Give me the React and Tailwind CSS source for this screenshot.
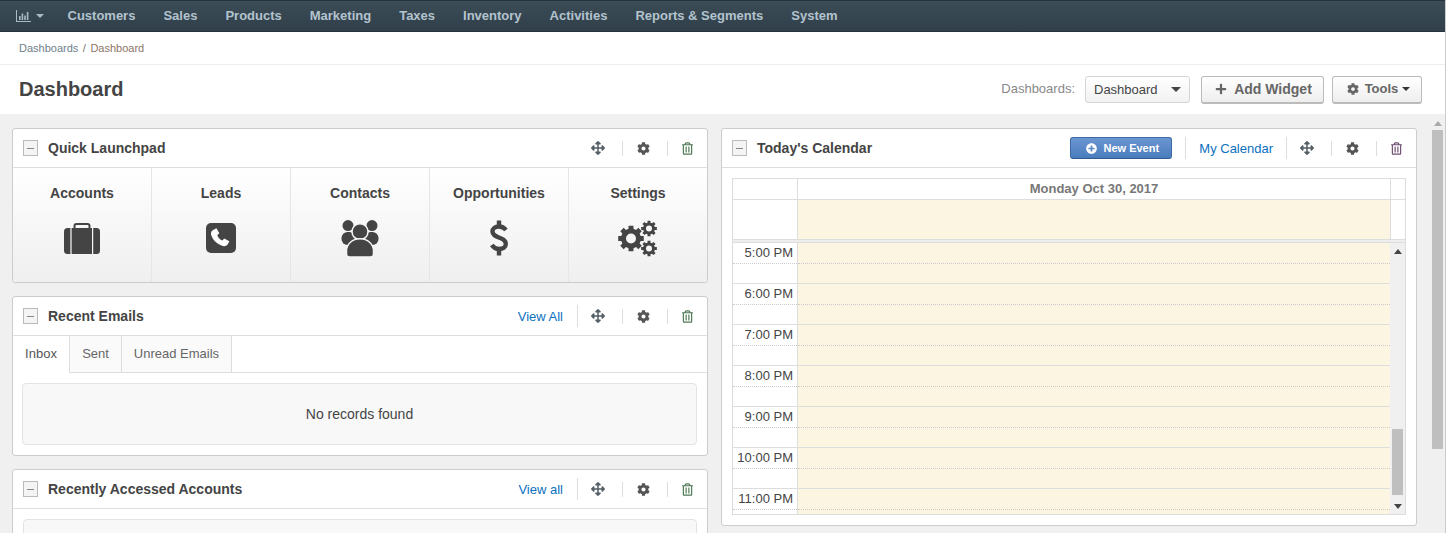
import React from "react";
import { FaArrowsAlt, FaCog, FaRegTrashAlt, FaPlus, FaPlusCircle } from "react-icons/fa";

function gearPath(cx, cy, R, r, hole, teeth) {
  const pts = [];
  const step = (Math.PI * 2) / teeth;
  for (let i = 0; i < teeth; i++) {
    const a = i * step - Math.PI / 2;
    const w = step * 0.24;
    const w2 = step * 0.32;
    [[a - w2, r], [a - w, R], [a + w, R], [a + w2, r]].forEach(([t, d]) => {
      pts.push(`${(cx + d * Math.cos(t)).toFixed(2)} ${(cy + d * Math.sin(t)).toFixed(2)}`);
    });
  }
  const ring = `M${cx - hole} ${cy}a${hole} ${hole} 0 1 0 ${hole * 2} 0a${hole} ${hole} 0 1 0 ${-hole * 2} 0z`;
  return `M${pts.join("L")}z${ring}`;
}

function Suitcase() {
  return (
    <svg width="36" height="31" viewBox="0 0 36 31">
      <path fill="none" stroke="#444" strokeWidth="2" d="M10.5 6V3a2 2 0 0 1 2-2h11a2 2 0 0 1 2 2v3" />
      <rect x="0" y="5" width="36" height="26" rx="3.5" fill="#444" />
      <path stroke="#f8f8f8" strokeWidth="1.2" d="M7 5v26M28.6 5v26" />
    </svg>
  );
}

function Phone() {
  return (
    <svg width="30" height="30" viewBox="0 0 30 30">
      <rect width="30" height="30" rx="5" fill="#444" />
      <path fill="#fff" d="M8 6.5l2.5-1.2 2.8 5-2 2c.8 2.4 2.8 4.4 5 5.2l2-2 5 2.8-1.2 2.5c-1 2-3.5 3-6 2-6-2.2-9.5-6-11-11-.6-2.3.5-4.4 2.9-5.3z" />
    </svg>
  );
}

function People() {
  return (
    <svg width="38" height="37" viewBox="0 0 38 37" fill="#444">
      <circle cx="7" cy="5.6" r="5.5" />
      <circle cx="31" cy="5.6" r="5.5" />
      <rect x="0.5" y="12" width="14" height="13" rx="6" />
      <rect x="23.5" y="12" width="14" height="13" rx="6" />
      <circle cx="19" cy="11.7" r="8" stroke="#f6f6f6" strokeWidth="1.5" />
      <path stroke="#f6f6f6" strokeWidth="1.5" d="M5.5 31c0-7 6-12.2 13.5-12.2S32.5 24 32.5 31v3a3 3 0 0 1-3 3h-21a3 3 0 0 1-3-3z" />
    </svg>
  );
}

function Dollar() {
  return (
    <svg width="18" height="36" viewBox="0 0 18 36" fill="none" stroke="#444" strokeWidth="4.4">
      <path d="M16 10C14 7.5 12 6.5 9 6.5 5 6.5 2.5 8.5 2.5 11.5 2.5 15 5.5 16 9 17.5 13 19 15.8 20.2 15.8 24 15.8 27 13 29 9 29 6 29 3.5 27.5 1.8 25" />
      <path d="M9 0.5V6M9 29V35.5" />
    </svg>
  );
}

function Gears() {
  return (
    <svg width="40" height="37" viewBox="0 0 40 37" fill="#444" fillRule="evenodd">
      <path d={gearPath(13, 18.5, 13, 10, 5, 8)} />
      <path d={gearPath(31, 8.5, 8, 6, 3, 8)} />
      <path d={gearPath(31, 28.5, 8, 6, 3, 8)} />
    </svg>
  );
}

const navItems = ["Customers", "Sales", "Products", "Marketing", "Taxes", "Inventory", "Activities", "Reports & Segments", "System"];
const launch = [
  ["Accounts", <Suitcase />],
  ["Leads", <Phone />],
  ["Contacts", <People />],
  ["Opportunities", <Dollar />],
  ["Settings", <Gears />],
];
const hours = ["5:00 PM", "6:00 PM", "7:00 PM", "8:00 PM", "9:00 PM", "10:00 PM", "11:00 PM"];

function Caret({ className = "" }) {
  return <span className={`inline-block w-0 h-0 border-x-[4px] border-x-transparent border-t-[4px] ${className}`} />;
}
function CaretUp({ className = "" }) {
  return <span className={`block w-0 h-0 border-x-[4px] border-x-transparent border-b-[5px] ${className}`} />;
}

function PanelActions({ link, trash = "text-[#4f7a55]" }) {
  return (
    <div className="flex items-center h-full">
      {link && (
        <a className="text-[13px] text-[#0a70c0] pr-[14px] pt-[2px] h-[22px] flex items-center border-r border-[#ddd]">{link}</a>
      )}
      <div className="w-[40px] flex justify-center text-[#555f66] mr-[4px]">
        <FaArrowsAlt className="w-[14px] h-[14px]" />
      </div>
      <span className="w-px h-[15px] bg-[#ddd]" />
      <div className="w-[44px] pr-[4px] flex justify-center text-[#555]"><FaCog className="w-[13px] h-[13px]" /></div>
      <span className="w-px h-[15px] bg-[#ddd]" />
      <div className={`w-[39px] flex justify-center ${trash}`}><FaRegTrashAlt className="w-[11px] h-[13px]" /></div>
    </div>
  );
}

function Panel({ title, actions, children, className = "" }) {
  return (
    <section className={`bg-white border border-[#ccc] rounded-[3px] ${className}`}>
      <header className="h-[39px] border-b border-[#ddd] flex items-center justify-between">
        <div className="flex items-center">
          <span className="ml-[10px] w-[15px] h-[16px] border border-[#bbb] bg-[#f4f4f4] flex items-center justify-center">
            <span className="w-[7px] h-px bg-[#888]" />
          </span>
          <h2 className="ml-[10px] text-[14px] font-bold text-[#444]">{title}</h2>
        </div>
        {actions}
      </header>
      {children}
    </section>
  );
}

export default function App() {
  return (
    <div className="w-[1446px] h-[533px] overflow-hidden flex flex-col bg-white text-[#444] border-r border-[#ccc]" style={{ fontFamily: '"Liberation Sans", Arial, sans-serif' }}>
      <nav className="h-[32px] shrink-0 bg-gradient-to-b from-[#3b4c57] to-[#31404a] border-y border-[#26333b] flex items-center pl-[16px] text-[#b3c3ce]">
        <svg width="15" height="12" viewBox="0 0 15 12" className="text-[#a9bac6]" fill="currentColor">
          <path d="M0 0h1v11h14v1H0z" /><path d="M3 6h1.6v4H3zM5.6 3.5h1.6V10H5.6zM8.2 5.5h1.6V10H8.2zM10.8 2h1.6v8h-1.6z" />
        </svg>
        <Caret className="ml-[5px] mr-[23.5px] border-t-[#a9bac6]" />
        <div className="flex gap-[28px] text-[13px] font-bold">
          {navItems.map((n) => <span key={n}>{n}</span>)}
        </div>
      </nav>

      <div className="h-[33px] shrink-0 border-b border-[#eee] flex items-center pl-[19px] text-[11px] text-[#777]">
        <span className="text-[#6f7f8a]">Dashboards</span><span className="mx-[4.5px]">/</span><span className="text-[#8c7468]">Dashboard</span>
      </div>

      <div className="h-[49px] shrink-0 flex items-center justify-between pl-[19px] pr-[23px]">
        <h1 className="text-[20px] font-bold text-[#444] -mt-[2px]">Dashboard</h1>
        <div className="flex items-center">
          <span className="text-[13px] text-[#888] -mt-[2px]">Dashboards:</span>
          <div className="ml-[10px] w-[105px] h-[27px] border border-[#d5d5d5] rounded-[3px] bg-gradient-to-b from-white to-[#f2f2f2] flex items-center justify-between pl-[8px] pr-[8px] text-[13px] text-[#444]">
            Dashboard <Caret className="border-x-[5px] border-t-[5px] border-t-[#444]" />
          </div>
          <button className="ml-[11px] w-[123px] h-[28px] border border-[#bbb] border-b-2 rounded-[3px] bg-gradient-to-b from-white to-[#eee] flex items-center justify-center pl-[2px] gap-[7px] text-[14px] font-bold text-[#666]">
            <FaPlus className="w-[12px] h-[12px]" />Add Widget
          </button>
          <button className="ml-[8px] w-[90px] h-[28px] border border-[#bbb] border-b-2 rounded-[3px] bg-gradient-to-b from-white to-[#eee] flex items-center justify-center pl-[3px] gap-[6px] text-[13px] font-bold text-[#666]">
            <FaCog className="w-[12px] h-[12px]" />Tools<Caret className="-ml-[2px] border-t-[#333]" />
          </button>
        </div>
      </div>

      <main className="flex-1 min-h-0 bg-[#f0f0f0] flex pl-[12px] overflow-hidden">
        <div className="mt-[14px] w-[696px] shrink-0 flex flex-col gap-[13px]">
          <Panel title="Quick Launchpad" actions={<PanelActions />}>
            <div className="grid grid-cols-[138px_139px_139px_139px_139px] h-[114px] bg-gradient-to-b from-white to-[#efefef] rounded-b-[3px]">
              {launch.map(([t, icon], i) => (
                <div key={t} className={`flex flex-col items-center pt-[15px] ${i ? "border-l border-[#e6e6e6]" : ""}`}>
                  <span className="text-[14px] font-bold text-[#444]">{t}</span>
                  <span className="mt-[14px] h-[40px] flex items-center text-[#444]">{icon}</span>
                </div>
              ))}
            </div>
          </Panel>

          <Panel title="Recent Emails" actions={<PanelActions link="View All" />}>
            <div className="h-[37px] border-b border-[#ddd] flex text-[13px]">
              <span className="w-[57px] h-[37px] pb-[2px] bg-white border-r border-[#ddd] flex items-center justify-center text-[#555]">Inbox</span>
              <span className="w-[52px] pb-[1px] bg-[#fafafa] border-r border-[#ddd] flex items-center justify-center text-[#666]">Sent</span>
              <span className="w-[110px] pb-[1px] bg-[#fafafa] border-r border-[#ddd] flex items-center justify-center text-[#666]">Unread Emails</span>
            </div>
            <div className="pt-[10px] pb-[10px] pl-[9px] pr-[10px]">
              <div className="h-[62px] rounded-[4px] border border-[#e3e3e3] bg-[#f8f8f8] flex items-center justify-center text-[14px] text-[#444]">No records found</div>
            </div>
          </Panel>

          <Panel title="Recently Accessed Accounts" actions={<PanelActions link="View all" />} className="shrink-0">
            <div className="pt-[10px] px-[10px] h-[40px]">
              <div className="h-[62px] rounded-[4px] border border-[#e3e3e3] bg-[#f8f8f8]" />
            </div>
          </Panel>
        </div>

        <Panel
          className="mt-[14px] ml-[13px] w-[696px] h-[398px] shrink-0"
          title="Today's Calendar"
          actions={
            <div className="flex items-center h-full">
              <button className="w-[102px] h-[22px] rounded-[3px] border border-[#3c6ba5] border-b-[#2f5b94] bg-gradient-to-b from-[#6b96d2] to-[#4a7cbc] flex items-center justify-center pl-[3px] gap-[6px] text-[11px] font-bold text-white">
                <FaPlusCircle className="w-[11px] h-[11px]" />New Event
              </button>
              <span className="ml-[13px] w-px h-[22px] bg-[#ddd]" />
              <a className="pl-[13px] pt-[1px] text-[13px] text-[#0a70c0]">My Calendar</a>
              <span className="ml-[13px] w-px h-[22px] bg-[#ddd]" />
              <PanelActions trash="text-[#6e4f70]" />
            </div>
          }
        >
          <div className="mx-[10px] mt-[10px] w-[674px] h-[337px] border border-[#ddd] flex flex-col overflow-hidden">
            <div className="h-[21px] shrink-0 flex border-b border-[#ddd]">
              <div className="w-[65px] border-r border-[#ddd]" />
              <div className="flex-1 flex items-center justify-center text-[13px] font-bold text-[#777]">Monday Oct 30, 2017</div>
              <div className="w-[15px] border-l border-[#ddd]" />
            </div>
            <div className="h-[39px] shrink-0 flex">
              <div className="w-[65px] border-r border-[#ddd]" />
              <div className="flex-1 bg-[#fcf5e2]" />
              <div className="w-[15px] border-l border-[#ddd]" />
            </div>
            <div className="h-[4px] shrink-0 bg-[#eee] border-y border-[#ddd]" />
            <div className="flex-1 min-h-0 flex overflow-hidden">
              <div className="w-[657px] shrink-0">
                {hours.map((h) => (
                  <div key={h} className="h-[41px] flex border-b border-[#ddd]">
                    <div className="w-[65px] shrink-0 border-r border-[#ddd] flex flex-col">
                      <div className="h-[21px] border-b border-dotted border-[#ccc] flex items-center justify-end pr-[4px] text-[13px] text-[#444]">{h}</div>
                    </div>
                    <div className="flex-1 bg-[#fcf5e2]">
                      <div className="h-[21px] border-b border-dotted border-[#ccc]" />
                    </div>
                  </div>
                ))}
              </div>
              <div className="w-[15px] shrink-0 bg-[#f0f0f0] flex flex-col items-center">
                <CaretUp className="mt-[6px] border-b-[#444]" />
                <div className="mt-[175px] w-[11px] h-[66px] bg-[#bfbfbf]" />
                <Caret className="mt-[9px] border-t-[5px] border-t-[#444]" />
              </div>
            </div>
          </div>
        </Panel>

        <div className="ml-[14px] w-[13px] shrink-0 flex flex-col items-center">
          <CaretUp className="mt-[7px] border-b-[#aaa]" />
          <div className="mt-[4px] w-[11px] h-[319px] bg-[#bfbfbf]" />
        </div>
      </main>
    </div>
  );
}
